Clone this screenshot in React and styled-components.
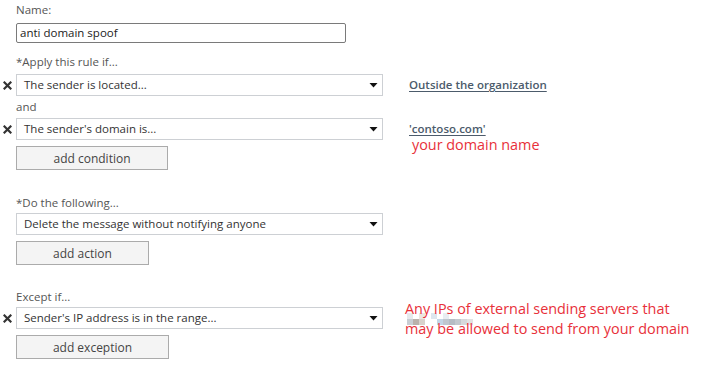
import React from "react"
import styled, { createGlobalStyle } from "styled-components"

const GlobalStyle = createGlobalStyle`
  html, body {
    margin: 0;
    padding: 0;
    background: #ffffff;
  }
  body {
    font-family: "Open Sans", "Noto Sans", sans-serif;
    font-size: 11.5px;
    color: #333333;
  }
`

const Page = styled.div`
  position: relative;
  width: 703px;
  height: 374px;
  padding: 2px 0 0 16px;
  box-sizing: border-box;
`

const Label = styled.div`
  color: #555555;
  font-size: 11.5px;
  line-height: 16px;
  margin-top: ${p => p.$top || 0}px;
  margin-bottom: ${p => p.$bottom ?? 4}px;
`

const TextInput = styled.div`
  width: 330px;
  height: 20px;
  box-sizing: border-box;
  border: 1px solid #7a7a7a;
  border-radius: 2px;
  padding: 0 3px;
  line-height: 18px;
  color: #222222;
`

const Row = styled.div`
  position: relative;
  display: flex;
  align-items: center;
  margin-left: -16px;
  margin-bottom: ${p => p.$bottom || 0}px;
`

const RemoveCell = styled.div`
  width: 16px;
  height: 22px;
  display: flex;
  align-items: center;
  justify-content: center;
  padding-right: 2px;
  box-sizing: border-box;
`

const Select = styled.div`
  width: 367px;
  height: 22px;
  box-sizing: border-box;
  border: 1px solid #cdd0d4;
  display: flex;
  align-items: center;
  justify-content: space-between;
  padding: 0 4px 0 7px;
  line-height: 16px;
  color: #333333;
`

const Value = styled.a`
  margin-left: 26px;
  line-height: 16px;
  color: #4c5b6b;
  font-weight: 600;
  text-decoration: underline;
  text-underline-offset: 2px;
  cursor: pointer;
`

const Button = styled.button`
  display: block;
  width: ${p => p.$width}px;
  height: 24px;
  margin-top: 6px;
  box-sizing: border-box;
  border: 1px solid #ababab;
  background: #f4f4f4;
  color: #444444;
  font-family: inherit;
  font-size: 12px;
  padding: 0;
`

const Note = styled.div`
  position: absolute;
  left: ${p => p.$left}px;
  top: ${p => p.$top}px;
  color: #e8303a;
  font-size: 14.4px;
  line-height: 20px;
  white-space: nowrap;
`

const Mosaic = styled.svg`
  position: absolute;
  left: 407px;
  top: 311px;
`

const RemoveIcon = () => (
  <svg width="9" height="9" viewBox="0 0 9 9">
    <path d="M1.5 1.5 L7.5 7.5 M7.5 1.5 L1.5 7.5" stroke="#333" strokeWidth="2.2" strokeLinecap="square" />
  </svg>
)

const Arrow = () => (
  <svg width="9" height="5" viewBox="0 0 9 5">
    <path d="M0.5 0 H8.5 L4.5 4.5 Z" fill="#111" />
  </svg>
)

const Dropdown = ({ text, removable, value, bottom }) => (
  <Row $bottom={bottom}>
    <RemoveCell>{removable && <RemoveIcon />}</RemoveCell>
    <Select>
      <span>{text}</span>
      <Arrow />
    </Select>
    {value && <Value>{value}</Value>}
  </Row>
)

const blocks = [
  [0, 6, "#c9ced4"], [6, 6, "#b9b1ab"], [12, 6, "#d8d2cc"], [24, 0, "#dde6ee"], [30, 6, "#c3d6e6"],
  [36, 6, "#bfc7cf"], [42, 6, "#b5bcc4"], [48, 6, "#c2c8ce"], [54, 6, "#d6d9dc"], [60, 6, "#e2e2e2"],
  [0, 0, "#e6e9ec"], [12, 0, "#ece6e1"], [36, 0, "#e8edf2"],
]

const App = () => (
  <>
    <GlobalStyle />
    <Page>
      <Label $bottom={5}>Name:</Label>
      <TextInput>anti domain spoof</TextInput>

      <Label $top={11}>*Apply this rule if...</Label>
      <Dropdown removable text="The sender is located..." value="Outside the organization" bottom={3} />
      <Label $bottom={3}>and</Label>
      <Dropdown removable text="The sender's domain is..." value="'contoso.com'" />
      <Button $width={152}>add condition</Button>

      <Label $top={25} $bottom={2}>*Do the following...</Label>
      <Dropdown text="Delete the message without notifying anyone" />
      <Button $width={133}>add action</Button>

      <Label $top={24} $bottom={2}>Except if...</Label>
      <Dropdown removable text="Sender's IP address is in the range..." />
      <Button $width={153}>add exception</Button>

      <Note $left={412} $top={136} style={{ lineHeight: "18px" }}>your domain name</Note>
      <Mosaic width="66" height="14" viewBox="0 0 66 14">
        {blocks.map(([x, y, c], i) => (
          <rect key={i} x={x} y={y + 2} width="6" height="6" fill={c} />
        ))}
      </Mosaic>
      <Note $left={405} $top={299}>
        Any IPs of external sending servers that
        <br />
        may be allowed to send from your domain
      </Note>
    </Page>
  </>
)

export default App
